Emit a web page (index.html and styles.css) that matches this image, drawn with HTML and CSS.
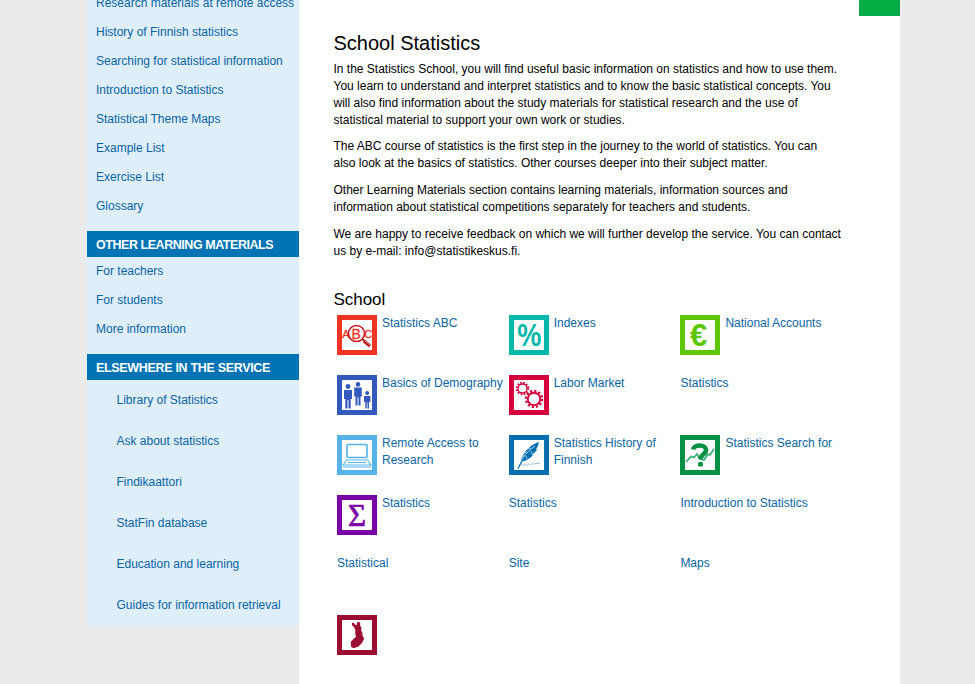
FILE: index.html
```html
<!DOCTYPE html>
<html lang="en">
<head>
<meta charset="utf-8">
<title>School Statistics</title>
<link rel="stylesheet" href="styles.css">
</head>
<body>
<div class="page">
  <nav class="sidebar">
    <ul class="menu menu-top">
      <li><a>Research materials at remote access</a></li>
      <li><a>History of Finnish statistics</a></li>
      <li><a>Searching for statistical information</a></li>
      <li><a>Introduction to Statistics</a></li>
      <li><a>Statistical Theme Maps</a></li>
      <li><a>Example List</a></li>
      <li><a>Exercise List</a></li>
      <li><a>Glossary</a></li>
    </ul>
    <h3>OTHER LEARNING MATERIALS</h3>
    <ul class="menu">
      <li><a>For teachers</a></li>
      <li><a>For students</a></li>
      <li><a>More information</a></li>
    </ul>
    <h3 class="wide">ELSEWHERE IN THE SERVICE</h3>
    <ul class="services">
      <li><a>Library of Statistics</a></li>
      <li><a>Ask about statistics</a></li>
      <li><a>Findikaattori</a></li>
      <li><a>StatFin database</a></li>
      <li><a>Education and learning</a></li>
      <li><a>Guides for information retrieval</a></li>
    </ul>
  </nav>
  <main class="content">
    <div class="banner"></div>
    <article>
      <h1>School Statistics</h1>
      <p>In the Statistics School, you will find useful basic information on statistics and how to use them.<br>You learn to understand and interpret statistics and to know the basic statistical concepts. You<br>will also find information about the study materials for statistical research and the use of<br>statistical material to support your own work or studies.</p>
      <p>The ABC course of statistics is the first step in the journey to the world of statistics. You can<br>also look at the basics of statistics. Other courses deeper into their subject matter.</p>
      <p>Other Learning Materials section contains learning materials, information sources and<br>information about statistical competitions separately for teachers and students.</p>
      <p>We are happy to receive feedback on which we will further develop the service. You can contact<br>us by e-mail: info@statistikeskus.fi.</p>
      <h2>School</h2>
      <div class="tiles">
        <div class="tile">
          <svg class="icon red" viewBox="5 5 30 30"><g stroke-width=".3" stroke="#ef3423" fill="#ef3423"><text x="5.3" y="23" font-size="11">A</text><text x="27.2" y="23" font-size="11">C</text><text x="14.6" y="23.500" font-size="14">B</text></g><circle cx="19.5" cy="18.5" r="8" fill="none" stroke="#c4101c" stroke-width="1.5"/><path d="M25 24l2.5 2" stroke="#c4101c" stroke-width="2"/><path d="M27 26l6 5" stroke="#b80f1b" stroke-width="3.4"/><path d="M28 26l5 4" stroke="#fff" stroke-width=".6"/></svg>
          <a>Statistics ABC</a>
        </div>
        <div class="tile">
          <svg class="icon teal" viewBox="5 5 30 30"><text class="percent" x="20.3" y="30.5" text-anchor="middle" textLength="25" lengthAdjust="spacingAndGlyphs" fill="#00b8aa">%</text></svg>
          <a>Indexes</a>
        </div>
        <div class="tile">
          <svg class="icon lime" viewBox="5 5 30 30"><text class="euro" x="18.5" y="30.500" text-anchor="middle" fill="#5dc600">€</text></svg>
          <a>National Accounts</a>
        </div>
        <div class="tile">
          <svg class="icon blue" viewBox="5 5 30 30"><g fill="#3459bd"><circle cx="11" cy="11.5" r="2.4"/><path d="M7 15h8v9h-1.3v9.5h-2.2V25h-1v8.5H8.300V24H7z"/><circle cx="21" cy="9.400" r="2.300"/><path d="M17.200 12.500h7.600v9h-1.300v9h-2v-8.300h-1v8.300h-2v-9h-1.300z"/><circle cx="30.200" cy="18" r="2"/><path d="M27 21h6.400v6H32v6.500h-1.500v-6h-.7v6h-1.500V27H27z"/></g></svg>
          <a>Basics of Demography</a>
        </div>
        <div class="tile">
          <svg class="icon crimson" viewBox="5 5 30 30"><g fill="none" stroke="#d4003b"><circle cx="13.500" cy="13.500" r="4.500" stroke-width="1.300"/><circle cx="13.500" cy="13.500" r="5.800" stroke-width="2" stroke-dasharray="1.600 1.440"/><circle cx="25" cy="24" r="6.200" stroke-width="1.900"/><circle cx="25" cy="24" r="8" stroke-width="2.400" stroke-dasharray="2.200 1.990"/></g></svg>
          <a>Labor Market</a>
        </div>
        <div class="tile"><a>Statistics</a></div>
        <div class="tile">
          <svg class="icon sky" viewBox="5 5 30 30"><g fill="none" stroke="#55b3e9"><rect x="10" y="9.500" width="20" height="13" rx="1" stroke-width="1.600"/><path d="M9.500 25h21l3.500 5H6zM6 32h28" stroke-width="1.200"/><path d="M11 27.500h18" stroke-width="1"/></g></svg>
          <a>Remote Access to<br>Research</a>
        </div>
        <div class="tile">
          <svg class="icon navy" viewBox="5 5 30 30"><path d="M11.500 28C12 20 19 11 29.500 7c.3 3-1 5-2.500 7l1 .2c-1 2.400-3 4-5 5.300l1 .4c-2.500 3-6 5.500-10.500 6.600z" fill="#006fb2"/><path d="M9 33c2-7 7-15 17-22" fill="none" stroke="#fff" stroke-width=".7"/><path d="M12.500 27L9 33.500" stroke="#006fb2" stroke-width="1.300"/><path d="M12 22l4-2M14 18l4-1M18 14l4-1M18 24l-1-3M23 19l-1-3" stroke="#fff" stroke-width=".6"/><path d="M12 30.300l1.500-1 1 1 2-1 1.500 1 2-1.500 1.500 1 2-1.200 1 .8 2.500-1.400 1 .9 3-1" fill="none" stroke="#8fc0df" stroke-width="1"/></svg>
          <a>Statistics History of<br>Finnish</a>
        </div>
        <div class="tile">
          <svg class="icon green" viewBox="5 5 30 30"><path d="M6 27l5-5.500 3 1 3-3.500 3 5 4 1 4-6 2 1 4-6" fill="none" stroke="#35ae78" stroke-width="1.700"/><path d="M13 14.500c1-5.500 13-5.500 13 .5 0 4.500-5.500 4.400-5.500 9" fill="none" stroke="#009145" stroke-width="4.500"/><rect x="18" y="27" width="5" height="4.500" rx="1.500" fill="#009145"/></svg>
          <a>Statistics Search for</a>
        </div>
        <div class="tile">
          <svg class="icon purple" viewBox="5 5 30 30"><text class="sigma" x="20" y="30.500" text-anchor="middle" fill="#7b00a5" stroke="#7b00a5" stroke-width=".7">Σ</text></svg>
          <a>Statistics</a>
        </div>
        <div class="tile"><a>Statistics</a></div>
        <div class="tile"><a>Introduction to Statistics</a></div>
        <div class="tile"><a>Statistical</a></div>
        <div class="tile"><a>Site</a></div>
        <div class="tile"><a>Maps</a></div>
        <div class="tile">
          <svg class="icon maroon" viewBox="5 5 30 30"><path d="M15 7.700l2 .3 1.200 1.800 1.500.2.300-2.500 2-.7 1.300 1.200-.1 3 1.300 1.800-.3 2.500 1.300 2.700-.1 2.500 1.800 3-2.200 4.500-3.500 3.500-5 1.700-2.300-1.200-.5-5 3.300-3.500 2.300-2-1-1.500v-4.500l-1-3-2.300-2.300z" fill="#9b0d31"/></svg>
        </div>
      </div>
    </article>
  </main>
</div>
</body>
</html>
```
FILE: styles.css
```css
* { box-sizing: border-box; }
body {
  margin: 0;
  height: 684px;
  overflow: hidden;
  background: #ebebeb;
  font: 12px/17px "Liberation Sans", Arial, sans-serif;
  color: #000;
}
.page { display: flex; align-items: flex-start; width: 813px; height: 684px; margin-left: 87px; }
.sidebar { width: 212px; flex: none; margin-top: -11px; background: #deeefb; }
ul { list-style: none; margin: 0; padding: 0; }
a { color: #0a64a4; white-space: nowrap; }
.menu { padding: 0 0 10px 9px; }
.menu li { height: 29px; line-height: 29px; }
.sidebar h3 {
  margin: 0;
  height: 26px;
  padding-left: 9px;
  background: #0073b5;
  color: #fff;
  font-size: 12.5px;
  line-height: 28px;
  font-weight: bold;
  letter-spacing: -.45px;
  white-space: nowrap;
}
.sidebar .wide { letter-spacing: -.32px; }
.services { padding-left: 29.5px; }
.services li { height: 41px; line-height: 41px; }
.content { flex: 1; height: 684px; background: #fff; }
.banner { width: 41px; height: 16px; margin-left: auto; background: #04ae45; border: solid #0ca455; border-width: 0 1px 1px; }
article { padding: 15px 0 0 34.5px; }
h1 { margin: 0 0 6px; font-size: 20px; line-height: 24px; font-weight: normal; }
p { margin: 0 0 10px; white-space: nowrap; }
p:nth-of-type(1) { margin-bottom: 9px; }
h2 { margin: 30px 0 5px; font-size: 17px; line-height: 20px; font-weight: normal; letter-spacing: -.05px; }
.tiles { display: grid; grid-template-columns: repeat(3, 171.7px); grid-auto-rows: 60px; padding-left: 3.5px; }
.tile { display: flex; align-items: flex-start; gap: 5px; }
.icon { flex: none; width: 40px; height: 40px; background: #fff; border: 5px solid; overflow: hidden; }
.icon text { font-family: "Liberation Sans", Arial, sans-serif; }
.icon .percent { font: 600 30px "Open Sans", sans-serif; }
.icon .euro { font: bold 31px "Liberation Sans", sans-serif; }
.icon .sigma { font: 31px "Liberation Serif", serif; }
.red { border-color: #ef3423; }
.teal { border-color: #00b8aa; }
.lime { border-color: #5dc600; }
.blue { border-color: #3459bd; }
.crimson { border-color: #d4003b; }
.sky { border-color: #55b3e9; }
.navy { border-color: #006fb2; }
.green { border-color: #009145; }
.purple { border-color: #7b00a5; }
.maroon { border-color: #9b0d31; }
```
